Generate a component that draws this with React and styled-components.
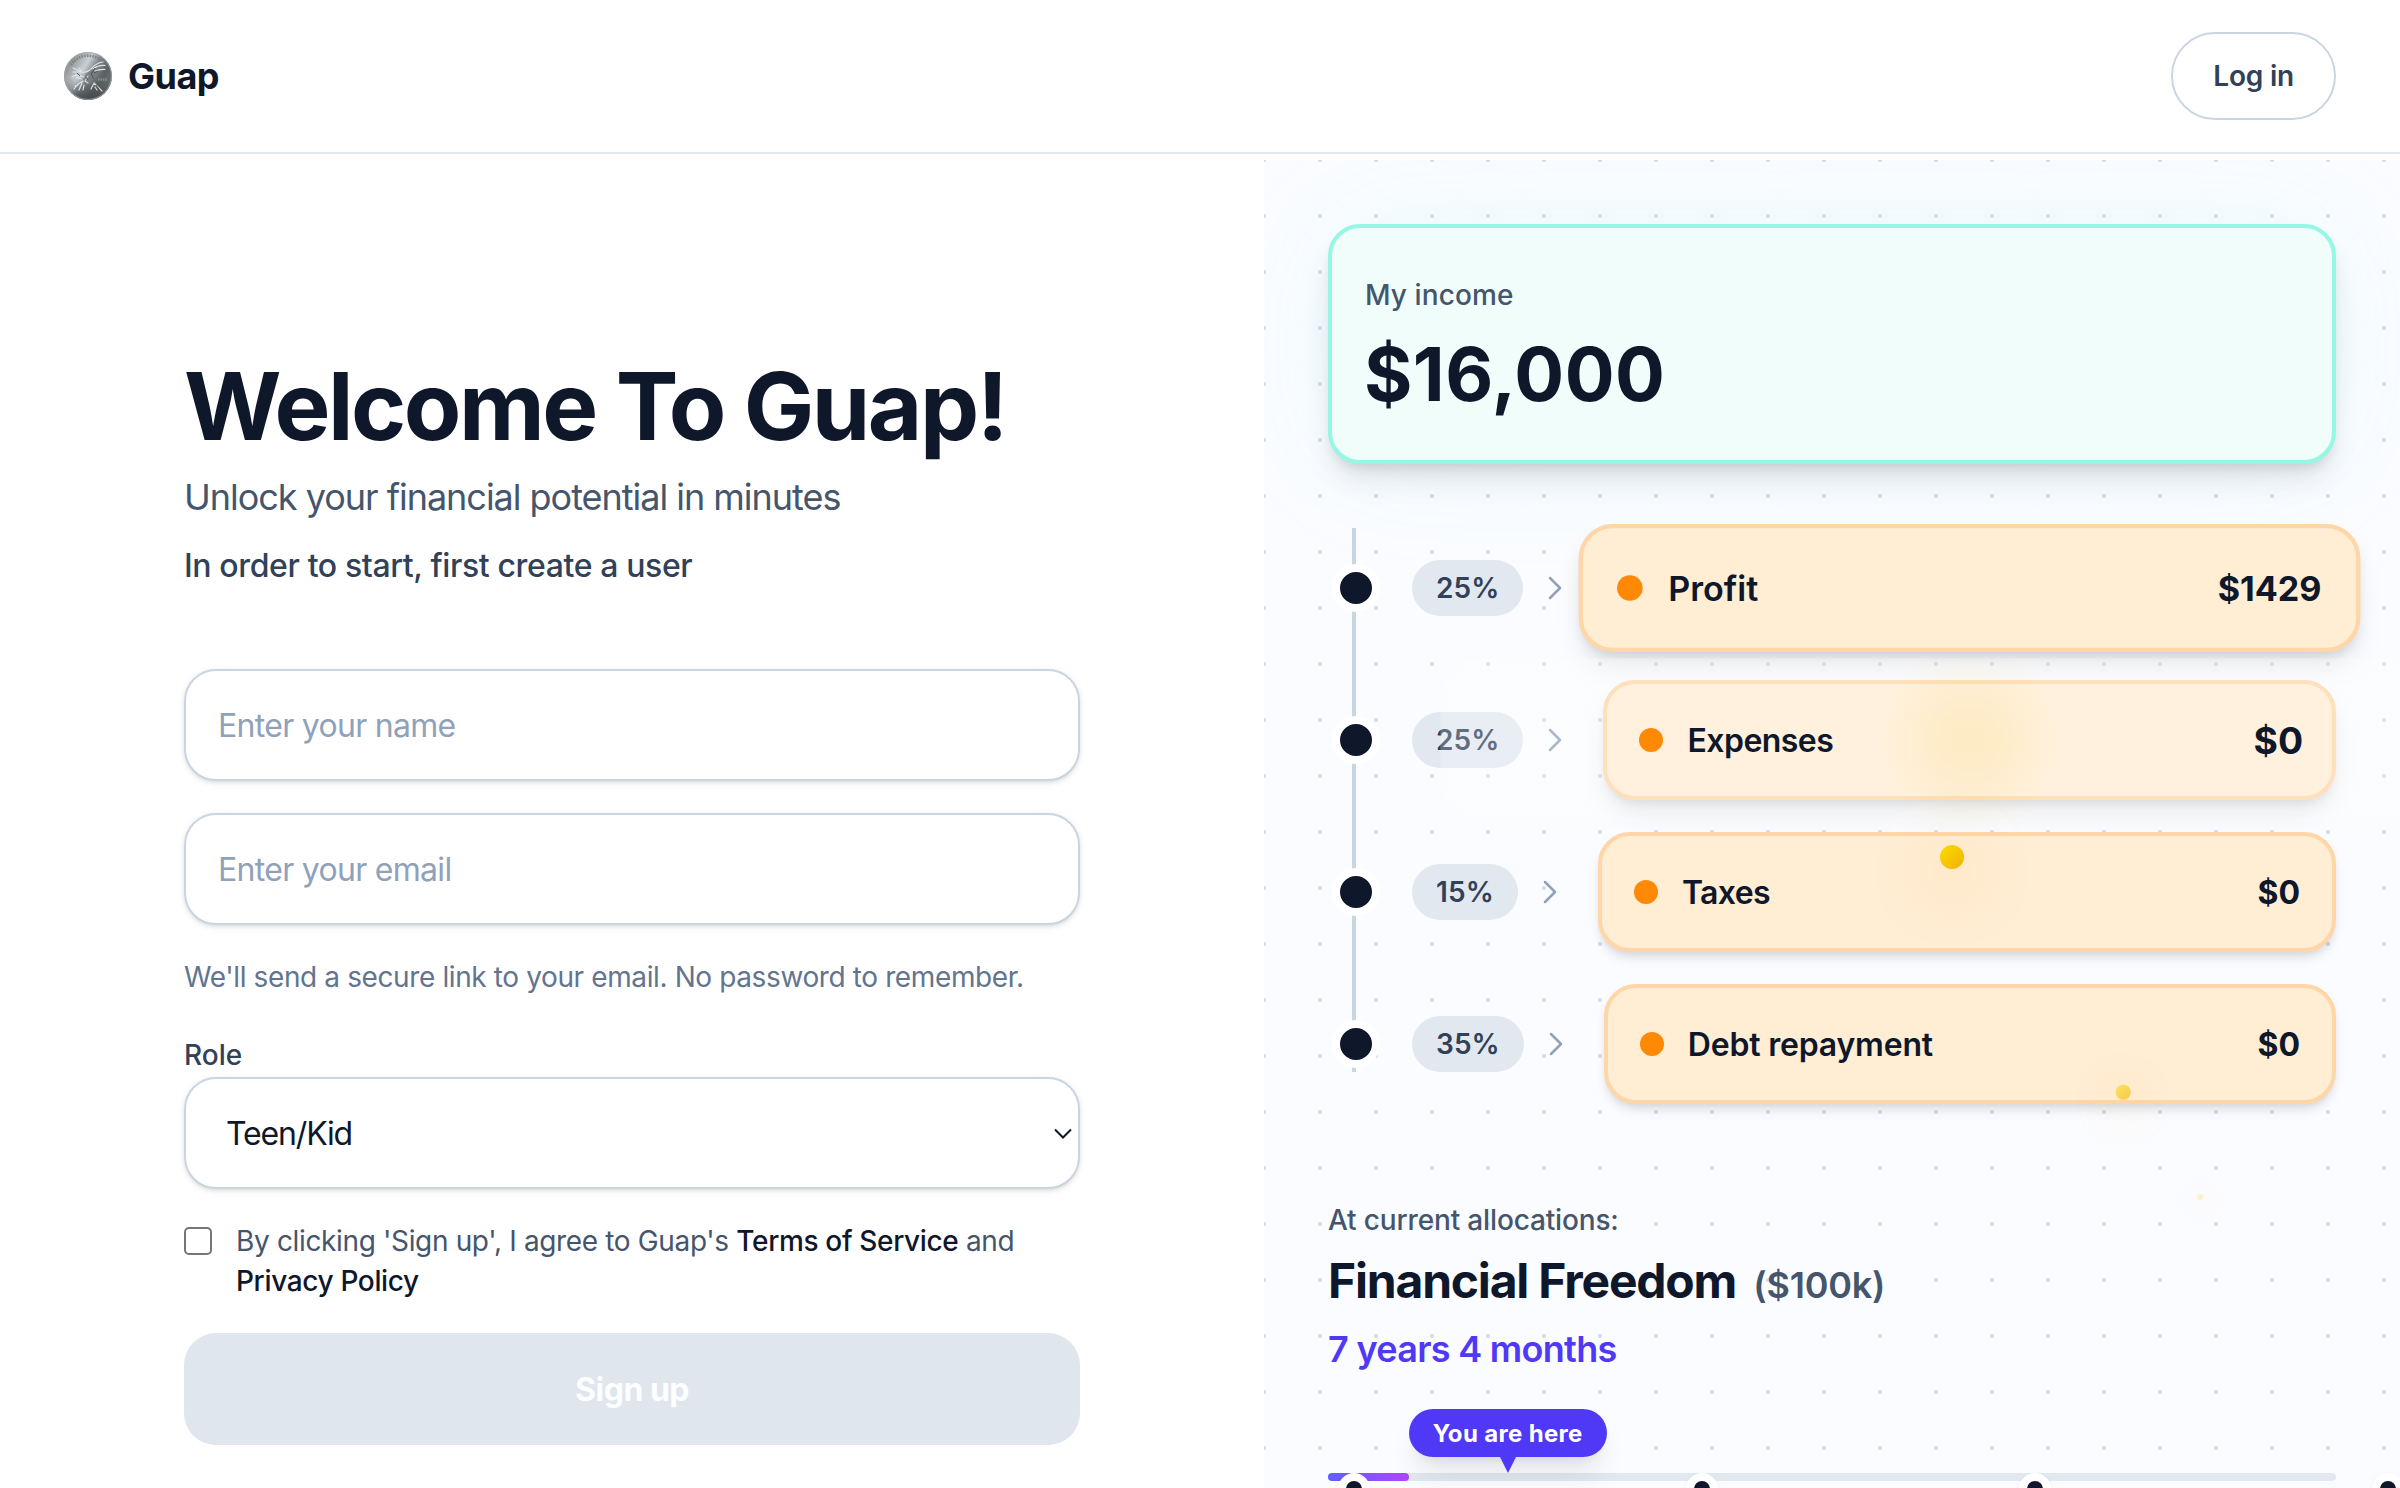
import React from "react";
import styled, { createGlobalStyle, css } from "styled-components";

const c = {
  ink: "#0f172b",
  slate700: "#314158",
  slate600: "#45556c",
  slate500: "#62748e",
  slate400: "#90a1b9",
  slate300: "#cad5e2",
  slate200: "#e2e8f0",
  indigo: "#4f39f6",
};

const GlobalStyle = createGlobalStyle`
  *, *::before, *::after { box-sizing: border-box; }
  body {
    margin: 0;
    background: #fff;
    color: ${c.ink};
    font-family: Inter, "Liberation Sans", sans-serif;
    font-size: 32px;
    -webkit-font-smoothing: antialiased;
  }
  h1, h2, p { margin: 0; }
`;

const Page = styled.div`
  display: flex;
  flex-direction: column;
  height: 1488px;
  overflow: hidden;
`;

const Header = styled.header`
  display: flex;
  flex: none;
  align-items: center;
  justify-content: space-between;
  height: 154px;
  padding: 0 64px;
  border-bottom: 2px solid ${c.slate200};
`;

const Brand = styled.div`
  display: flex;
  align-items: center;
  gap: 16px;
  font-size: 36px;
  line-height: 56px;
  font-weight: 700;
  letter-spacing: -0.5px;
`;

const LoginButton = styled.button`
  height: 88px;
  padding: 0 40px;
  border: 2px solid ${c.slate300};
  border-radius: 44px;
  background: #fff;
  color: ${c.slate700};
  font: 600 28px/40px Inter, sans-serif;
  letter-spacing: -0.2px;
`;

const Main = styled.main`
  display: grid;
  flex: 1;
  grid-template-columns: 1264px 1136px;
  padding-top: 6px;
  min-height: 0;
`;

const SignupPane = styled.section`
  display: flex;
  flex-direction: column;
  align-items: center;
  padding-top: 198px;
`;

const Form = styled.form`
  display: flex;
  flex-direction: column;
  width: 896px;
`;

const Title = styled.h1`
  font-size: 94px;
  line-height: 96px;
  font-weight: 700;
  letter-spacing: -2.45px;
  white-space: nowrap;
`;

const Subtitle = styled.p`
  margin-top: 15px;
  font-size: 36px;
  line-height: 56px;
  letter-spacing: -1.02px;
  color: ${c.slate600};
`;

const Lead = styled.p`
  margin-top: 17px;
  font-size: 32px;
  line-height: 48px;
  font-weight: 500;
  letter-spacing: -0.38px;
  color: ${c.slate700};
`;

const Fields = styled.div`
  display: flex;
  flex-direction: column;
  gap: 32px;
  margin-top: 79px;
`;

const fieldBox = css`
  width: 100%;
  height: 112px;
  border: 2px solid ${c.slate300};
  border-radius: 32px;
  background: #fff;
  box-shadow: 0 2px 6px rgba(0, 0, 0, 0.1), 0 2px 4px -2px rgba(0, 0, 0, 0.1);
`;

const TextInput = styled.input`
  ${fieldBox}
  padding: 0 32px;
  font: 400 32px/48px Inter, sans-serif;
  letter-spacing: -0.7px;
  &::placeholder {
    color: ${c.slate400};
    opacity: 1;
  }
`;

const Hint = styled.p`
  margin-top: 32px;
  font-size: 28px;
  line-height: 40px;
  letter-spacing: -0.385px;
  color: ${c.slate500};
`;

const RoleLabel = styled.label`
  margin-top: 38px;
  font-size: 28px;
  line-height: 40px;
  font-weight: 500;
  color: ${c.slate700};
`;

const SelectBox = styled.div`
  ${fieldBox}
  display: flex;
  align-items: center;
  justify-content: space-between;
  margin-top: 2px;
  padding: 2px 6px 0 40px;
  font-size: 32px;
  line-height: 48px;
  letter-spacing: -1.15px;
`;

const Agreement = styled.div`
  display: flex;
  align-items: flex-start;
  gap: 24px;
  margin-top: 32px;
  font-size: 28px;
  line-height: 40px;
  letter-spacing: -0.35px;
  color: ${c.slate600};
`;

const Checkbox = styled.span`
  flex: none;
  width: 28px;
  height: 28px;
  margin-top: 6px;
  border: 2px solid #767676;
  border-radius: 5px;
  background: #fff;
`;

const Strong = styled.span`
  font-weight: 500;
  color: ${c.ink};
`;

const SubmitButton = styled.button`
  height: 112px;
  margin-top: 32px;
  padding: 2px 0 0;
  border: 0;
  border-radius: 32px;
  background: #dfe6ee;
  color: #fdfeff;
  font: 650 32px/48px Inter, sans-serif;
  letter-spacing: -0.5px;
`;

const PreviewPane = styled.section`
  position: relative;
  overflow: hidden;
  padding: 64px 64px 0;
  background-color: #fbfcff;
  background-image: radial-gradient(circle at center, #d5dde7 2px, transparent 2.2px);
  background-size: 56px 56px;
  background-position: -28px -28px;
`;

const IncomeCard = styled.div`
  height: 240px;
  padding: 47px 32px 0;
  border: 4px solid #96f7e4;
  border-radius: 32px;
  background: #f0fdfa;
  box-shadow: 0 20px 30px -6px rgba(0, 0, 0, 0.1), 0 8px 12px -4px rgba(0, 0, 0, 0.1),
    0 0 120px rgba(60, 225, 235, 0.09);
`;

const IncomeLabel = styled.p`
  font-size: 28px;
  line-height: 40px;
  font-weight: 500;
  letter-spacing: 0.1px;
  text-indent: 1px;
  color: ${c.slate600};
`;

const IncomeValue = styled.p`
  margin-top: 19px;
  font-size: 74px;
  line-height: 80px;
  font-weight: 700;
  letter-spacing: 0.4px;
`;

const Timeline = styled.div`
  display: flex;
  flex-direction: column;
  gap: 32px;
  margin-top: 64px;
  background: linear-gradient(${c.slate300}, ${c.slate300}) 24px 0 / 4px 544px no-repeat;
`;

const Row = styled.div`
  display: flex;
  align-items: center;
  height: 120px;
  padding-left: 4px;
`;

const Node = styled.span`
  flex: none;
  width: 48px;
  height: 48px;
  border: 8px solid #fff;
  border-radius: 50%;
  background: ${c.ink};
`;

const Percent = styled.span`
  flex: none;
  height: 56px;
  margin: 0 16px 0 32px;
  padding: 0 24px;
  border-radius: 28px;
  background: ${c.slate200};
  color: ${c.slate700};
  font-size: 28px;
  line-height: 56px;
  font-weight: 600;
  letter-spacing: 0.1px;
`;

const Bucket = styled.div`
  position: relative;
  display: flex;
  flex: 1;
  align-items: center;
  gap: 24px;
  height: 120px;
  margin-left: 32px;
  padding: 0 32px;
  border: 4px solid #ffd6a7;
  border-radius: 32px;
  background: #ffedd4;
  transform: ${(p) => (p.$lifted ? "scale(1.0665)" : "none")};
  box-shadow: ${(p) =>
    p.$lifted || p.$pulsing
      ? "0 16px 28px -5px rgba(0,0,0,.1), 0 7px 10px -4px rgba(0,0,0,.1)"
      : "0 8px 12px -2px rgba(0,0,0,.1), 0 4px 8px -4px rgba(0,0,0,.1)"};
`;

const Pulse = styled.span`
  position: absolute;
  inset: 0;
  border-radius: 28px;
  transform: scale(1.46);
  background: radial-gradient(
    circle,
    rgba(250, 230, 160, 0.34) 0,
    rgba(251, 231, 165, 0.27) 18px,
    rgba(254, 243, 210, 0.24) 42px,
    rgba(255, 255, 255, 0.24) 66px
  );
`;

const BucketDot = styled.span`
  position: relative;
  width: 24px;
  height: 24px;
  border-radius: 50%;
  background: #ff8904;
`;

const BucketName = styled.span`
  position: relative;
  flex: 1;
  padding-top: 2px;
  line-height: 48px;
  font-weight: 600;
  letter-spacing: ${(p) => p.$tracking}px;
`;

const BucketValue = styled.span`
  position: relative;
  padding-top: 2px;
  line-height: 48px;
  font-weight: 700;
  transform: ${(p) => (p.$grown ? "scale(1.165)" : "none")};
`;

const Summary = styled.div`
  margin-top: 96px;
`;

const SummaryNote = styled.p`
  font-size: 28px;
  line-height: 40px;
  font-weight: 500;
  letter-spacing: -0.15px;
  color: ${c.slate600};
`;

const SummaryTitle = styled.h2`
  display: flex;
  align-items: baseline;
  gap: 17px;
  height: 64px;
  margin-top: 9px;
  font-size: 48px;
  line-height: 64px;
  font-weight: 700;
  letter-spacing: -1.2px;
`;

const Target = styled.span`
  font-size: 36px;
  line-height: 40px;
  font-weight: 600;
  letter-spacing: -0.2px;
  color: ${c.slate600};
`;

const Eta = styled.p`
  margin-top: 8px;
  font-size: 36px;
  line-height: 56px;
  font-weight: 600;
  letter-spacing: -0.7px;
  color: ${c.indigo};
`;

const Progress = styled.div`
  position: relative;
  height: 8px;
  margin-top: 96px;
  border-radius: 4px;
  background: ${c.slate200};
`;

const ProgressFill = styled.div`
  width: 8%;
  height: 8px;
  border-radius: 4px;
  background: linear-gradient(90deg, #615fff, #ad46ff);
`;

const Milestone = styled.span`
  position: absolute;
  top: 0;
  left: ${(p) => p.$x}px;
  width: 32px;
  height: 32px;
  margin-left: -16px;
  border: 8px solid #fff;
  border-radius: 50%;
  background: ${c.ink};
  box-shadow: 0 2px 6px rgba(0, 0, 0, 0.06);
`;

const Here = styled.div`
  position: absolute;
  left: 8%;
  bottom: 24px;
  height: 48px;
  padding: 1px 24px 0;
  border-radius: 24px;
  background: ${c.indigo};
  color: #fff;
  font-size: 24px;
  line-height: 48px;
  font-weight: 700;
  letter-spacing: 0.33px;
  white-space: nowrap;
  box-shadow: 0 20px 30px -6px rgba(0, 0, 0, 0.1), 0 8px 12px -8px rgba(0, 0, 0, 0.1);
  &::after {
    content: "";
    position: absolute;
    top: 100%;
    left: 50%;
    margin-left: -8px;
    border: 8px solid transparent;
    border-top: 16px solid ${c.indigo};
    border-bottom: 0;
  }
`;

const Coin = styled.span`
  position: absolute;
  left: ${(p) => p.$x}px;
  top: ${(p) => p.$y}px;
  width: ${(p) => p.$size}px;
  height: ${(p) => p.$size}px;
  border-radius: 50%;
  opacity: ${(p) => p.$opacity};
  transform: translate(-50%, -50%);
  background: linear-gradient(135deg, #fddc00, #f0b100);
  box-shadow: 0 ${(p) => p.$size * 0.5}px ${(p) => p.$size * 2.4}px ${(p) => p.$size * 0.3}px
    rgba(253, 199, 100, 0.38);
`;

const buckets = [
  { percent: "25%", name: "Profit", value: "$1429", lifted: true, tracking: 0 },
  { percent: "25%", name: "Expenses", value: "$0", pulsing: true, tracking: -0.55 },
  { percent: "15%", name: "Taxes", value: "$0", tracking: -0.6 },
  { percent: "35%", name: "Debt repayment", value: "$0", tracking: -0.2 },
];

const coins = [
  { x: 688, y: 697, size: 24, opacity: 1 },
  { x: 859, y: 932, size: 14.5, opacity: 0.6 },
  { x: 935.5, y: 1036.5, size: 6, opacity: 0.2 },
];

function CoinLogo() {
  return (
    <svg width="48" height="48" viewBox="0 0 48 48" aria-hidden="true">
      <defs>
        <linearGradient id="metal" x1="0.1" y1="0.25" x2="0.95" y2="0.75">
          <stop offset="0" stopColor="#8f9497" />
          <stop offset="0.32" stopColor="#c9d0d4" />
          <stop offset="0.5" stopColor="#858b8e" />
          <stop offset="0.75" stopColor="#5c6163" />
          <stop offset="1" stopColor="#6f7273" />
        </linearGradient>
        <linearGradient id="shade" x1="0" y1="0" x2="0" y2="1">
          <stop offset="0.55" stopColor="#3f4547" stopOpacity="0" />
          <stop offset="1" stopColor="#3f4547" stopOpacity="0.85" />
        </linearGradient>
      </defs>
      <circle cx="24" cy="24" r="24" fill="url(#metal)" />
      <circle cx="24" cy="24" r="24" fill="url(#shade)" />
      <circle cx="24" cy="24" r="23.4" fill="none" stroke="#9da3a1" strokeWidth="0.9" />
      <path d="M7 13A20.5 20.5 0 0 1 38 9" fill="none" stroke="#747b7a" strokeWidth="2.6" strokeDasharray="1.6 1.1" opacity="0.8" />
      <path d="M26 18L30 13L37 11L35 17L33 24L28 29L25 32L21 30L19 27L22 22Z" fill="#777e81" opacity="0.85" />
      <path d="M27 17Q32 11 39 10M29 17Q34 13 41 13.5M31 19Q36 17 41 17.5M26 18Q22 21 18 20L15 16M18 20L9 16M18 20L9 20M20 25L12 23L8 25M12 25L17 27M19 29L14 32L10 37M18 31L15 38M20 33L19 38M14 33L11 34" fill="none" stroke="#dfe5e7" strokeWidth="1.2" strokeLinecap="round" />
      <path d="M24 24L21 29L24 31M30 31L27 37M30 31L38 39M31 35L33 38" fill="none" stroke="#d2d8da" strokeWidth="1.2" strokeLinecap="round" />
      <path d="M31 16L27 22L30 27M34 19L30 21M22 25L24 28M16 24L13 21M32 33L36 39" fill="none" stroke="#4b5153" strokeWidth="1" />
      <path d="M34 27.5H43" stroke="#858a8b" strokeWidth="2.4" strokeDasharray="1.6 0.8" />
    </svg>
  );
}

function Chevron({ color }) {
  return (
    <svg width="32" height="32" viewBox="0 0 24 24" fill="none" stroke={color} strokeWidth="1.9" strokeLinecap="round" strokeLinejoin="round">
      <path d="m8.25 4.5 7.5 7.5-7.5 7.5" />
    </svg>
  );
}

export default function App() {
  return (
    <Page>
      <GlobalStyle />
      <Header>
        <Brand>
          <CoinLogo />
          Guap
        </Brand>
        <LoginButton>Log in</LoginButton>
      </Header>
      <Main>
        <SignupPane>
          <Form>
            <Title>Welcome To Guap!</Title>
            <Subtitle>Unlock your financial potential in minutes</Subtitle>
            <Lead>In order to start, first create a user</Lead>
            <Fields>
              <TextInput placeholder="Enter your name" />
              <TextInput placeholder="Enter your email" />
            </Fields>
            <Hint>We'll send a secure link to your email. No password to remember.</Hint>
            <RoleLabel>Role</RoleLabel>
            <SelectBox>
              Teen/Kid
              <svg width="18" height="12" viewBox="0 0 18 12" fill="none" stroke={c.ink} strokeWidth="2">
                <path d="M1 1.5L9 9.5L17 1.5" />
              </svg>
            </SelectBox>
            <Agreement>
              <Checkbox />
              <span>
                By clicking 'Sign up', I agree to Guap's <Strong>Terms of Service</Strong> and
                <br />
                <Strong>Privacy Policy</Strong>
              </span>
            </Agreement>
            <SubmitButton type="button">Sign up</SubmitButton>
          </Form>
        </SignupPane>
        <PreviewPane>
          <IncomeCard>
            <IncomeLabel>My income</IncomeLabel>
            <IncomeValue>$16,000</IncomeValue>
          </IncomeCard>
          <Timeline>
            {buckets.map((b) => (
              <Row key={b.name}>
                <Node />
                <Percent>{b.percent}</Percent>
                <Chevron color={c.slate400} />
                <Bucket $lifted={b.lifted} $pulsing={b.pulsing}>
                  {b.pulsing && <Pulse />}
                  <BucketDot />
                  <BucketName $tracking={b.tracking}>{b.name}</BucketName>
                  <BucketValue $grown={b.pulsing}>{b.value}</BucketValue>
                </Bucket>
              </Row>
            ))}
          </Timeline>
          <Summary>
            <SummaryNote>At current allocations:</SummaryNote>
            <SummaryTitle>
              Financial Freedom <Target>($100k)</Target>
            </SummaryTitle>
            <Eta>7 years 4 months</Eta>
            <Progress>
              <ProgressFill />
              {[26, 374, 707, 1060].map((x) => (
                <Milestone key={x} $x={x} />
              ))}
              <Here>You are here</Here>
            </Progress>
          </Summary>
          {coins.map((k) => (
            <Coin key={k.x} $x={k.x} $y={k.y} $size={k.size} $opacity={k.opacity} />
          ))}
        </PreviewPane>
      </Main>
    </Page>
  );
}
